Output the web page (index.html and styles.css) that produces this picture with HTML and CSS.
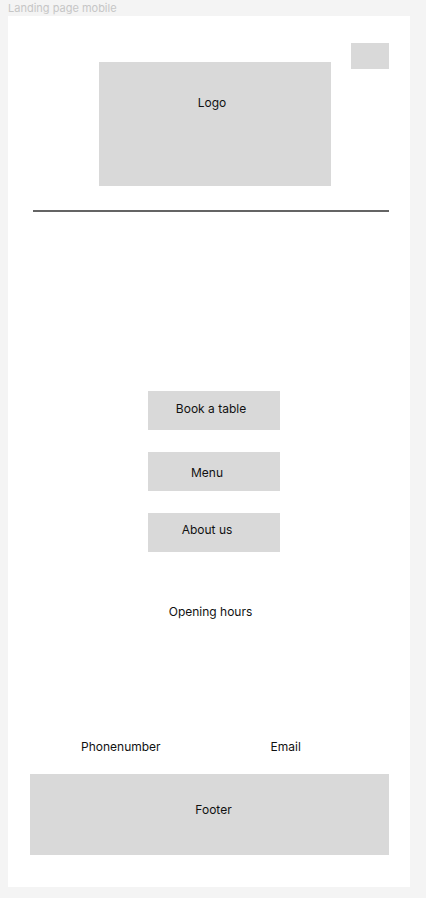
FILE: index.html
```html
<!DOCTYPE html>
<html lang="en">
<head>
<meta charset="utf-8">
<title>Landing page mobile</title>
<link rel="stylesheet" href="styles.css">
</head>
<body>
  <div class="frame-label">Landing page mobile</div>
  <main class="frame">
    <header class="header">
      <div class="menu-box"></div>
      <div class="logo">Logo</div>
    </header>
    <hr class="divider">
    <nav class="actions">
      <div class="btn btn-book">Book a table</div>
      <div class="btn btn-menu">Menu</div>
      <div class="btn btn-about">About us</div>
    </nav>
    <p class="hours">Opening hours</p>
    <div class="contacts">
      <span class="phone">Phonenumber</span>
      <span class="email">Email</span>
    </div>
    <footer class="footer">Footer</footer>
  </main>
</body>
</html>
```

FILE: styles.css
```css
* { box-sizing: border-box; }

html, body {
  margin: 0;
  padding: 0;
}

body {
  background: #f4f4f4;
  font-family: Inter, "Liberation Sans", Arial, sans-serif;
  font-size: 12px;
  line-height: 16px;
  color: #111;
  width: 426px;
  height: 898px;
  overflow: hidden;
}

.frame-label {
  height: 16px;
  padding-left: 8px;
  padding-top: 1px;
  font-size: 11px;
  line-height: 14px;
  color: #c6c6c6;
}

.frame {
  display: flex;
  flex-direction: column;
  margin-left: 8px;
  width: 402px;
  height: 871px;
  background: #ffffff;
}

.header {
  display: grid;
  padding-top: 27px;
}

.menu-box,
.logo {
  grid-area: 1 / 1;
}

.menu-box {
  justify-self: end;
  align-self: start;
  width: 38px;
  height: 26px;
  margin-right: 21px;
  background: #d9d9d9;
}

.logo {
  justify-self: start;
  width: 232px;
  height: 124px;
  margin-left: 91px;
  margin-top: 19px;
  padding-top: 33px;
  padding-right: 6px;
  text-align: center;
  background: #d9d9d9;
}

.divider {
  margin: 24px 0 0 25px;
  width: 356px;
  height: 2px;
  border: 0;
  background: #646464;
}

.actions {
  display: flex;
  flex-direction: column;
  gap: 22px;
  margin-top: 179px;
  margin-left: 140px;
}

.btn {
  width: 132px;
  height: 39px;
  background: #d9d9d9;
  text-align: center;
}

.btn-book { padding-top: 10px; padding-right: 6px; }
.btn-menu { padding-top: 13px; padding-right: 14px; }
.btn-about { padding-top: 9px; padding-right: 14px; }

.hours {
  margin: 52px 0 0;
  padding-left: 3px;
  text-align: center;
}

.contacts {
  display: flex;
  margin-top: 119px;
  padding-left: 73px;
}

.email {
  margin-left: 110px;
}

.footer {
  margin-top: 19px;
  margin-left: 22px;
  width: 359px;
  height: 81px;
  padding-top: 28px;
  padding-left: 8px;
  text-align: center;
  background: #d9d9d9;
}
```
